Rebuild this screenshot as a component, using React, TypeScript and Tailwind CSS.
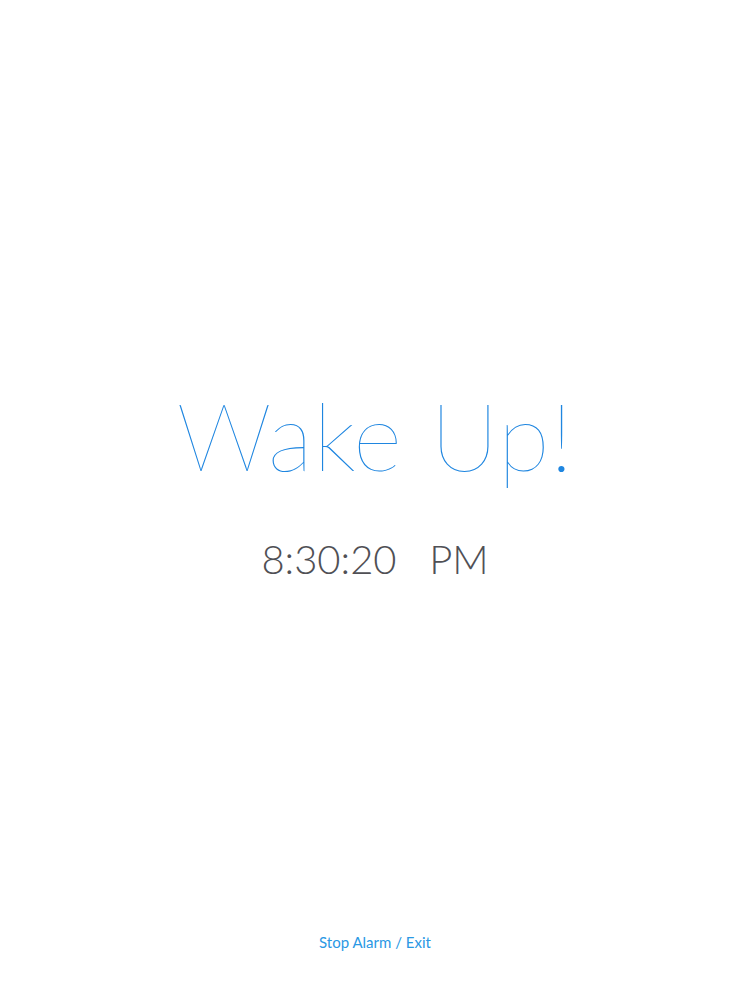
export default function App() {
  return (
    <div className="flex h-[1000px] w-[750px] flex-col items-center bg-white font-['Lato','Noto_Sans',sans-serif]">
      <div className="flex flex-1 flex-col items-center pt-[387px]">
        <h1 className="text-[95px] font-thin leading-none tracking-[0.5px] text-[#1f86e0]">Wake Up!</h1>
        <p className="mt-[57px] text-[40px] font-light leading-none text-[#505055]">
          8:30:20&nbsp;&nbsp;&nbsp;PM
        </p>
      </div>
      <button className="mb-[47px] text-[15px] text-[#2a98e4]">Stop Alarm / Exit</button>
    </div>
  );
}
